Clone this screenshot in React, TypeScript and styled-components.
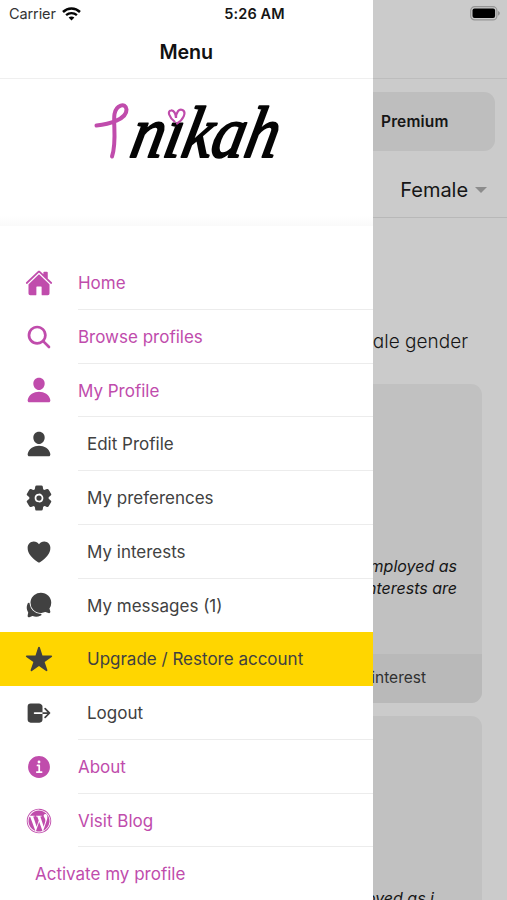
import React from "react";
import styled, { createGlobalStyle } from "styled-components";
import {
  IoHome,
  IoSearch,
  IoPerson,
  IoSettings,
  IoHeart,
  IoChatbubbles,
  IoStar,
  IoLogOut,
  IoInformationCircle,
  IoLogoWordpress,
} from "react-icons/io5";
import type { IconType } from "react-icons";

const PINK = "#c04cac";
const INK = "#414141";

const GlobalStyle = createGlobalStyle`
  *, *::before, *::after { box-sizing: border-box; }
  body { margin: 0; background: #cbcbcb; font-family: Inter, "Liberation Sans", sans-serif; }
`;

const Screen = styled.div`
  position: relative;
  width: 507px;
  height: 900px;
  overflow: hidden;
  background: #cbcbcb;
  color: #161616;
`;

const StatusBar = styled.header`
  position: absolute;
  inset: 0 0 auto;
  z-index: 2;
  height: 27px;
  padding: 0 7px 0 9px;
  display: grid;
  grid-template-columns: 1fr auto 1fr;
  align-items: center;
  color: #151515;
  font-size: 14.5px;
`;

const Carrier = styled.div`
  display: flex;
  align-items: center;
  gap: 6px;
  color: #333;
  letter-spacing: -0.1px;
`;

const Time = styled.div`
  font-weight: 600;
  font-size: 14.5px;
  letter-spacing: 0.1px;
`;

const BatterySlot = styled.div`
  display: flex;
  justify-content: flex-end;
`;

const Page = styled.main`
  display: flex;
  flex-direction: column;
  height: 100%;
`;

const NavSpace = styled.div`
  flex: none;
  height: 79px;
  border-bottom: 1px solid #bdbdbd;
`;

const Tabs = styled.div`
  flex: none;
  display: flex;
  height: 72px;
  padding: 13px 12px 0;
`;

const PremiumTab = styled.div`
  flex: 1;
  display: flex;
  align-items: center;
  padding-left: 369px;
  border-radius: 11px;
  background: #bebebe;
  font-size: 15.5px;
  font-weight: 600;
  letter-spacing: 0.15px;
`;

const FilterRow = styled.div`
  flex: none;
  display: flex;
  justify-content: flex-end;
  align-items: center;
  gap: 7px;
  height: 67px;
  padding: 12px 20px 0 0;
  border-bottom: 1px solid #b8b8b8;
  font-size: 20px;
  letter-spacing: -0.05px;
`;

const Caret = styled.span`
  border: 6px solid transparent;
  border-top-color: #8c8c8c;
  border-bottom: 0;
`;

const RoundedText = styled.p`
  margin: 0;
  font-feature-settings: "cv11";
  white-space: nowrap;
  text-align: right;
`;

const Notice = styled(RoundedText)`
  flex: none;
  height: 166px;
  padding: 110px 39px 0 0;
  font-size: 19px;
  line-height: 27px;
  font-weight: 300;
`;

const ProfileCard = styled.article`
  flex: none;
  display: flex;
  flex-direction: column;
  height: 319px;
  margin: 0 25px 13px;
  border-radius: 11px;
  overflow: hidden;
  background: #c1c1c1;
`;

const Summary = styled(RoundedText)<{ $inset: number }>`
  flex: 1;
  padding: 171px ${(p) => p.$inset}px 0 0;
  font-size: 16px;
  line-height: 22px;
  font-style: italic;
`;

const CardAction = styled.div`
  display: flex;
  justify-content: flex-end;
  align-items: center;
  height: 49px;
  padding: 0 56px 3px 0;
  background: #b9b9b9;
  color: #303030;
  font-size: 15.5px;
`;

const Drawer = styled.aside`
  position: absolute;
  inset: 0 auto 0 0;
  z-index: 1;
  width: 372.5px;
  display: flex;
  flex-direction: column;
  background: #fff;
`;

const DrawerTitle = styled.h1`
  flex: none;
  margin: 0;
  height: 79px;
  padding-top: 26px;
  border-bottom: 1px solid #efefef;
  color: #111;
  font-size: 19.7px;
  line-height: 52px;
  font-weight: 600;
  letter-spacing: -0.15px;
  text-align: center;
`;

const Brand = styled.div`
  flex: none;
  height: 147px;
  padding-top: 19px;
  display: flex;
  justify-content: center;
  align-items: flex-start;
  background: linear-gradient(#fff 136px, #fafafa);
`;

const MenuList = styled.nav`
  flex: none;
  display: flex;
  flex-direction: column;
  padding-top: 30px;
`;

const Item = styled.a<{ $accent: boolean; $highlight: boolean }>`
  display: flex;
  height: 53.78px;
  padding-left: 25.4px;
  background: ${(p) => (p.$highlight ? "#ffd600" : "transparent")};
  color: ${(p) => (p.$accent ? PINK : INK)};

  svg {
    flex: none;
    align-self: center;
    width: 28px;
    height: 28px;
  }
`;

const ItemLabel = styled.span<{ $indent: number; $line: boolean; $before: number }>`
  flex: 1;
  display: flex;
  align-items: center;
  margin-left: ${(p) => p.$before}px;
  padding: 1.2px 0 0 ${(p) => p.$indent}px;
  border-bottom: 1px solid ${(p) => (p.$line ? "#ececec" : "transparent")};
  font-size: 17px;
  white-space: nowrap;
`;

interface Entry {
  label: string;
  icon?: IconType;
  accent?: boolean;
  highlight?: boolean;
  line?: boolean;
}

const entries: Entry[] = [
  { label: "Home", icon: IoHome, accent: true },
  { label: "Browse profiles", icon: IoSearch, accent: true },
  { label: "My Profile", icon: IoPerson, accent: true },
  { label: "Edit Profile", icon: IoPerson },
  { label: "My preferences", icon: IoSettings },
  { label: "My interests", icon: IoHeart },
  { label: "My messages (1)", icon: IoChatbubbles, line: false },
  { label: "Upgrade / Restore account", icon: IoStar, highlight: true, line: false },
  { label: "Logout", icon: IoLogOut },
  { label: "About", icon: IoInformationCircle, accent: true },
  { label: "Visit Blog", icon: IoLogoWordpress, accent: true },
  { label: "Activate my profile", accent: true, line: false },
];

const LogoArt = styled.svg`
  overflow: visible;
`;

const WordMark = styled.text`
  font-family: "Liberation Serif", serif;
  font-size: 73px;
  font-style: italic;
  font-weight: 400;
  fill: #050505;
  stroke: #050505;
  stroke-width: 2px;
  stroke-linejoin: round;
`;

function Logo() {
  return (
    <LogoArt width="190" height="70" viewBox="92 98 190 70">
      <g transform="translate(129 157) skewX(-12)">
        <WordMark x="0" y="0" textLength="147" lengthAdjust="spacingAndGlyphs">
          nikah
        </WordMark>
      </g>
      <ellipse cx="180" cy="112.500" rx="9.500" ry="9.500" fill="#fff" />
      <path
        d="M97.500 125.500C110 124.500 128 119 127.500 109.500C126.500 102 117 105 115.500 114C114 123 118 142 113 156.500"
        fill="none"
        stroke={PINK}
        strokeWidth="4"
        strokeLinecap="round"
        strokeLinejoin="round"
      />
      <path
        d="M175.500 121.500C170 117 168 111 172 110.500C175 110 177 114 177 118C177 112 180 108.500 183.500 110C188 112.500 184 120 178 123.500"
        fill="none"
        stroke={PINK}
        strokeWidth="2.200"
        strokeLinecap="round"
      />
    </LogoArt>
  );
}

function Wifi() {
  return (
    <svg width="19" height="14" viewBox="0 0 19 14" fill="none" stroke="#050505">
      <path d="M1 5C5.800.4 13.200.4 18 5" strokeWidth="2.500" />
      <path d="M4.100 8.200C7.200 5.300 11.800 5.300 14.900 8.200" strokeWidth="2.300" />
      <path d="M9.500 13.500L6.600 10.600C8.200 9.200 10.800 9.200 12.400 10.600Z" fill="#050505" stroke="none" />
    </svg>
  );
}

function Battery() {
  return (
    <svg width="30" height="15" viewBox="0 0 30 15">
      <rect x=".7" y=".7" width="26.200" height="13.200" rx="4" fill="none" stroke="#959595" strokeWidth="1.200" />
      <rect x="2.500" y="2.500" width="22.600" height="9.600" rx="2" fill="#000" />
      <path d="M28.200 5v4.600c2-.8 2-3.800 0-4.600Z" fill="#858585" />
    </svg>
  );
}

export default function App() {
  return (
    <Screen>
      <GlobalStyle />
      <Page>
        <NavSpace />
        <Tabs>
          <PremiumTab>Premium</PremiumTab>
        </Tabs>
        <FilterRow>
          Female <Caret />
        </FilterRow>
        <Notice>ale gender</Notice>
        <ProfileCard>
          <Summary $inset={25}>
            employed as
            <br />
            interests are
          </Summary>
          <CardAction>interest</CardAction>
        </ProfileCard>
        <ProfileCard>
          <Summary $inset={48}>employed as i</Summary>
        </ProfileCard>
      </Page>

      <Drawer>
        <DrawerTitle>Menu</DrawerTitle>
        <Brand>
          <Logo />
        </Brand>
        <MenuList>
          {entries.map(({ label, icon: Icon, accent = false, highlight = false, line = true }) => (
            <Item key={label} $accent={accent} $highlight={highlight}>
              {Icon && <Icon />}
              <ItemLabel $before={Icon ? 24.6 : 0} $indent={!Icon ? 9.6 : accent ? 0 : 9} $line={line}>
                {label}
              </ItemLabel>
            </Item>
          ))}
        </MenuList>
      </Drawer>

      <StatusBar>
        <Carrier>
          Carrier <Wifi />
        </Carrier>
        <Time>5:26 AM</Time>
        <BatterySlot>
          <Battery />
        </BatterySlot>
      </StatusBar>
    </Screen>
  );
}
